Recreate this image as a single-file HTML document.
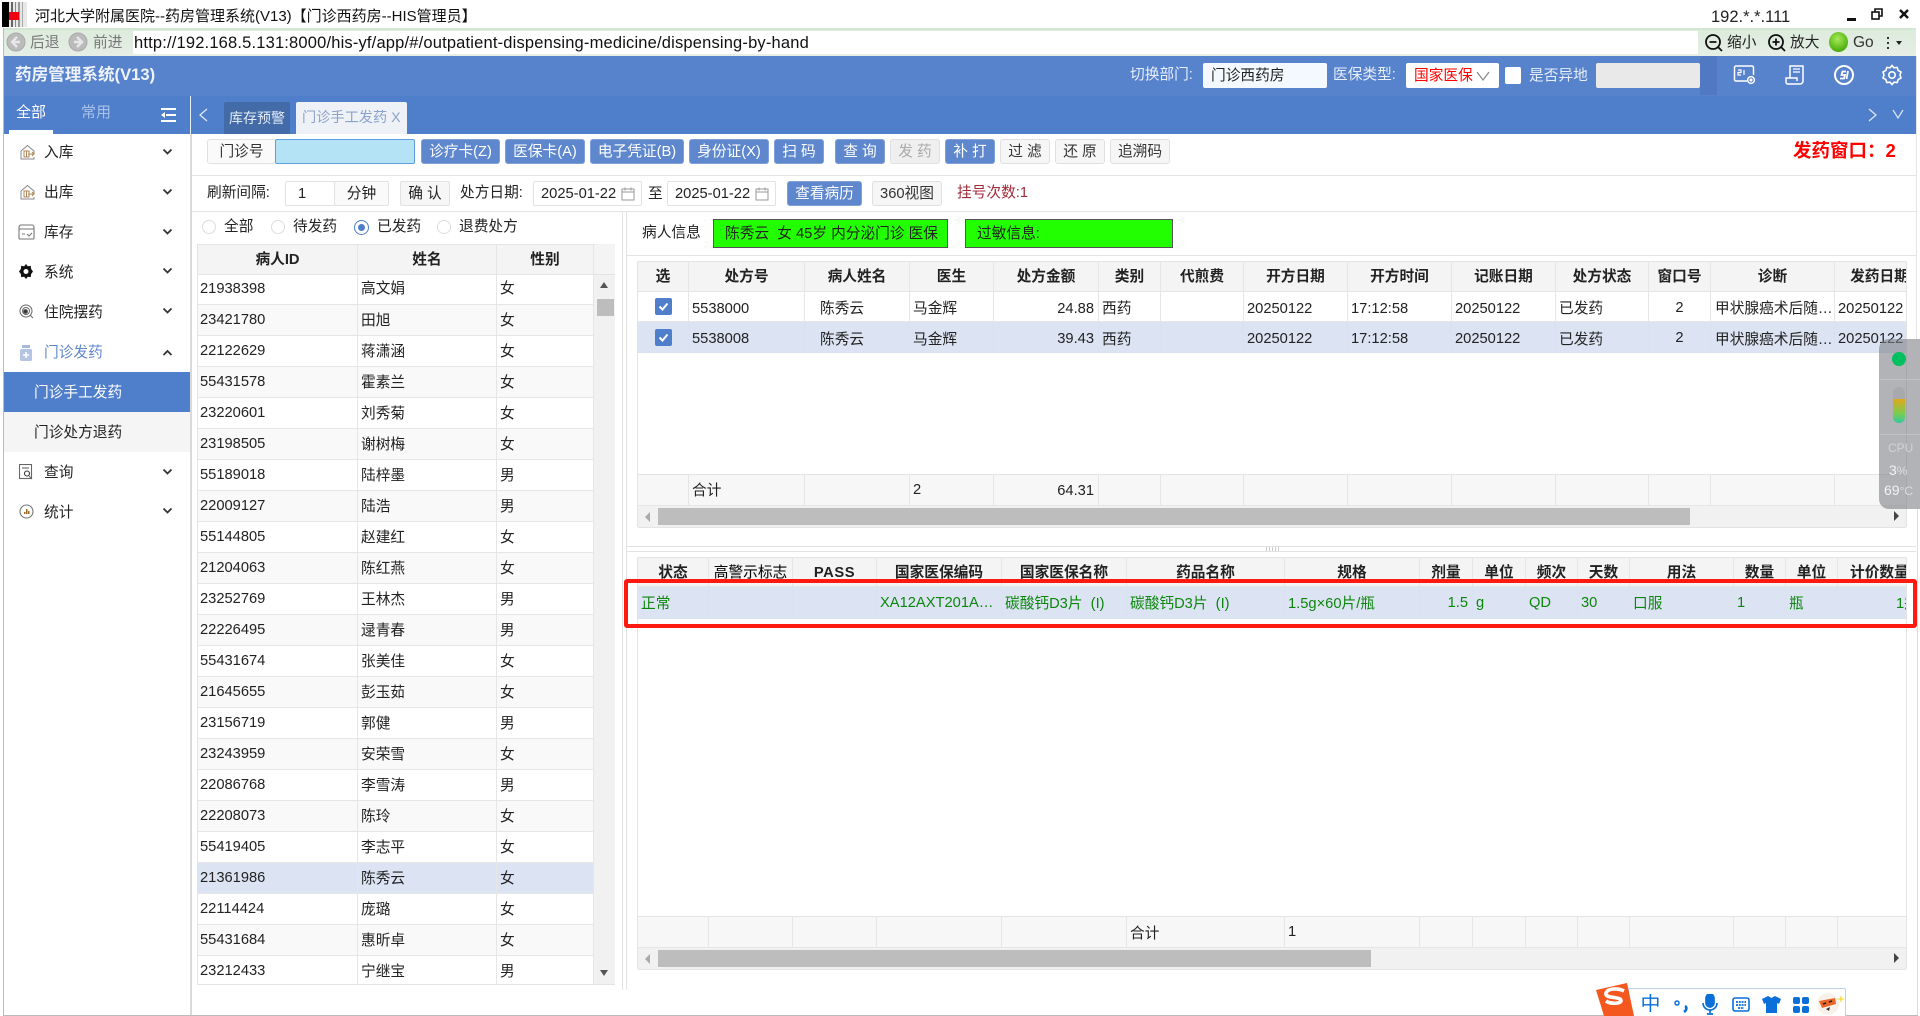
<!DOCTYPE html>
<html lang="zh"><head><meta charset="utf-8"><title>药房管理系统</title>
<style>
html,body{margin:0;padding:0;background:#fff}
body{width:1920px;height:1016px;position:relative;overflow:hidden;font-family:"Liberation Sans","Noto Sans CJK SC",sans-serif;font-size:14.7px;color:#222}
.a{position:absolute}
.t{position:absolute;white-space:nowrap;line-height:20px}
.b{position:absolute;box-sizing:border-box;text-align:center;border-radius:3px;white-space:nowrap;height:25px;line-height:25px;top:139px;border:1px solid #e0e0e0;background:#f6f6f6;color:#333}
.bl{background:#5f87cd;border-color:#7fa0d8;color:#fff}
.in{position:absolute;box-sizing:border-box;border:1px solid #e2e2e2;border-radius:2px;background:#fff;height:25px;line-height:25px;top:181px;white-space:nowrap}
.m{position:absolute;left:44px;line-height:20px;white-space:nowrap;color:#222}
.wt{color:#e8effa}
table{border-collapse:separate;border-spacing:0;table-layout:fixed;font-size:14.7px;color:#222}
td,th{box-sizing:border-box;border-right:1px solid #e6e6e6;border-bottom:1px solid #e6e6e6;padding:0 0 0 3px;overflow:hidden;white-space:nowrap;font-weight:normal}
th{font-weight:bold;background:#f4f4f4;text-align:center;padding:0 0 2px;color:#222}
.l tr:nth-child(even) td{background:#f9f9f9}
.l td{height:31px;padding-left:2px;padding-bottom:0}
.l td:nth-child(n+2){padding-left:3px;padding-bottom:2px}
.l tr.first td{height:30px;padding-bottom:2px}
.l tr.first td:nth-child(n+2){padding-bottom:4px}
.l tr.s td{background:#dce4f4}
.tp td{padding-top:2px}
.tp td:nth-child(2),.tp td:nth-child(5),.tp td:nth-child(8),.tp td:nth-child(9),.tp td:nth-child(10),.tp td:nth-child(14){padding-top:4px}
.hl td{background:#dce4f4;border-color:#d9e2f2}
.g td{color:#0c860c}
.f td{background:#f7f7f7;height:31px}
.r{text-align:right;padding-right:4px}
.sb{position:absolute;background:#f1f1f1}
.th{position:absolute;background:#bdbdbd}
.wrap{position:absolute;overflow:hidden}
.cb{display:block;width:17px;height:17px;margin:0 auto;background:#4f7ecb;border-radius:2px}
</style></head>
<body>
<!-- title bar -->
<svg class="a" style="left:2px;top:2px" width="25" height="25" viewBox="0 0 25 25"><rect width="25" height="25" fill="#e8e8e8"/><rect x="0" width="7" height="25" fill="#000"/><rect x="9" width="2" height="25" fill="#666"/><rect x="13" width="1" height="25" fill="#888"/><rect x="16" width="2" height="25" fill="#999"/><rect x="20" width="1" height="25" fill="#aaa"/><rect x="7" y="10" width="10" height="8" fill="#f00010"/></svg>
<div class="t" style="left:35px;top:7px;font-size:15px;color:#111">河北大学附属医院--药房管理系统(V13)【门诊西药房--HIS管理员】</div>
<div class="t" style="left:1711px;top:7px;font-size:16.5px;color:#222">192.*.*.111</div>
<div class="a" style="left:1847px;top:18px;width:9px;height:3px;background:#111"></div>
<svg class="a" style="left:1871px;top:8px" width="12" height="12" viewBox="0 0 12 12" fill="none" stroke="#111" stroke-width="1.6"><rect x="1" y="4" width="7" height="7"/><path d="M4 4V1h7v7H8"/></svg>
<svg class="a" style="left:1899px;top:9px" width="10" height="10" viewBox="0 0 10 10" stroke="#111" stroke-width="2.4"><path d="M1 1l8 8M9 1l-8 8"/></svg>

<!-- browser toolbar -->
<div class="a" style="left:3px;top:28px;width:1px;height:988px;background:#bbb"></div>
<div class="a" style="left:4px;top:28px;width:1912px;height:28px;background:linear-gradient(#dcebdc,#e6eee6)"></div>
<div class="a" style="left:4px;top:28px;width:1912px;height:2px;background:#d2e4d2"></div>
<div class="a" style="left:133px;top:31px;width:1565px;height:23px;background:#fff"></div>
<svg class="a" style="left:6px;top:32px" width="20" height="20" viewBox="0 0 20 20"><circle cx="10" cy="10" r="9" fill="#bbb" stroke="#aaa"/><path d="M11 5l-5 5 5 5M6 10h8" stroke="#e8e8e8" stroke-width="2.4" fill="none"/></svg>
<div class="t" style="left:30px;top:33px;color:#777">后退</div>
<svg class="a" style="left:68px;top:32px" width="20" height="20" viewBox="0 0 20 20"><circle cx="10" cy="10" r="9" fill="#bbb" stroke="#aaa"/><path d="M9 5l5 5-5 5M14 10H6" stroke="#e8e8e8" stroke-width="2.4" fill="none"/></svg>
<div class="t" style="left:93px;top:33px;color:#777">前进</div>
<div class="t" style="left:134px;top:33px;font-size:16.5px;color:#111;letter-spacing:.175px">http://192.168.5.131:8000/his-yf/app/#/outpatient-dispensing-medicine/dispensing-by-hand</div>
<svg class="a" style="left:1704px;top:33px" width="20" height="20" viewBox="0 0 20 20" fill="none" stroke="#111" stroke-width="1.8"><circle cx="9" cy="9" r="7"/><path d="M5.5 9h7M14 14l4 4"/></svg>
<div class="t" style="left:1727px;top:33px">缩小</div>
<svg class="a" style="left:1767px;top:33px" width="20" height="20" viewBox="0 0 20 20" fill="none" stroke="#111" stroke-width="1.8"><circle cx="9" cy="9" r="7"/><path d="M5.5 9h7M9 5.5v7M14 14l4 4"/></svg>
<div class="t" style="left:1790px;top:33px">放大</div>
<div class="a" style="left:1829px;top:32px;width:19px;height:20px;border-radius:50%;background:radial-gradient(circle at 45% 35%,#a6ea58,#5cb818 60%,#3a8c10)"></div>
<div class="t" style="left:1853px;top:33px;font-size:15.5px;color:#333">Go</div>
<div class="a" style="left:1887px;top:37px;width:2px;height:2px;background:#333;box-shadow:0 5px #333,0 10px #333"></div>
<div class="a" style="left:1896px;top:41px;border:3.5px solid transparent;border-top:4px solid #222"></div>

<!-- header -->
<div class="a" style="left:4px;top:56px;width:1912px;height:40px;background:#5782cc"></div>
<div class="t" style="left:15px;top:65px;font-size:16.6px;font-weight:bold;color:#eef3fb">药房管理系统(V13)</div>
<div class="t wt" style="left:1130px;top:65px">切换部门:</div>
<div class="a" style="left:1203px;top:63px;width:124px;height:25px;box-sizing:border-box;background:#f3f9ff;border-radius:2px;padding-left:8px;line-height:27px;color:#222">门诊西药房</div>
<div class="t wt" style="left:1333px;top:65px">医保类型:</div>
<div class="a" style="left:1406px;top:63px;width:93px;height:25px;box-sizing:border-box;background:#fff;border-radius:2px;padding-left:8px;line-height:27px;color:#f00">国家医保</div>
<svg class="a" style="left:1475px;top:70px" width="16" height="12" viewBox="0 0 16 12" fill="none" stroke="#888" stroke-width="1.2"><path d="M2 2l6 8 6-8"/></svg>
<div class="a" style="left:1505px;top:67px;width:16px;height:17px;background:#fff;border-radius:2px"></div>
<div class="t wt" style="left:1529px;top:66px">是否异地</div>
<div class="a" style="left:1596px;top:63px;width:104px;height:25px;background:#e9e9e9;border-radius:2px"></div>
<div class="a" style="left:1700px;top:56px;width:17px;height:39px;background:#5079c2"></div>
<svg class="a" style="left:1733px;top:65px" width="24" height="20" viewBox="0 0 24 20" fill="none" stroke="#fff" stroke-width="1.5"><path d="M14 16H3a1.5 1.5 0 0 1-1.5-1.5v-12A1.5 1.5 0 0 1 3 1h16a1.5 1.5 0 0 1 1.5 1.5V10"/><circle cx="18" cy="15" r="3.4"/><circle cx="18" cy="15" r=".8" fill="#fff"/><path d="M5 5h3v2.500H5v2.500h3M11 5v5" stroke-width="1.200"/></svg>
<svg class="a" style="left:1785px;top:64px" width="20" height="22" viewBox="0 0 20 22" fill="none" stroke="#fff" stroke-width="1.5"><path d="M5 14V2h13v15a3 3 0 0 1-3 3H3a2 2 0 0 1-2-2v-4h11v3"/><path d="M8 5h7M8 8h7" stroke-width="1.2"/></svg>
<svg class="a" style="left:1833px;top:64px" width="22" height="22" viewBox="0 0 22 22" fill="none" stroke="#fff" stroke-width="2"><circle cx="11" cy="11" r="9"/><path d="M13 7.500H9.500L8.500 11H12L11 14.500H7M15 7l-1.500 8" stroke-width="1.800"/></svg>
<svg class="a" style="left:1882px;top:64px" width="20" height="22" viewBox="0 0 20 22" fill="none" stroke="#fff" stroke-width="1.6"><path d="M10 1.500l2 2.300 3.200-.3 1 3 2.800 1.500-1 3 1 3-2.800 1.500-1 3-3.200-.3-2 2.300-2-2.300-3.200.3-1-3L1 14l1-3-1-3 2.800-1.500 1-3 3.200.3z"/><circle cx="10" cy="11" r="3.200"/></svg>

<!-- tab bar -->
<div class="a" style="left:4px;top:96px;width:1912px;height:38px;background:#4f7ecb"></div>
<div class="a" style="left:190px;top:96px;width:1px;height:38px;background:#e6edf8"></div>
<div class="t" style="left:16px;top:103px;color:#fff;font-size:15px">全部</div>
<div class="t" style="left:81px;top:103px;color:#a9c2ea;font-size:15px">常用</div>
<div class="a" style="left:9px;top:130px;width:44px;height:4px;background:#fff"></div>
<svg class="a" style="left:160px;top:108px" width="16" height="14" viewBox="0 0 16 14" fill="#fff"><rect x="1" width="15" height="2"/><rect x="6" y="6" width="10" height="2"/><rect x="1" y="12" width="15" height="2"/><path d="M1 7l4-3v6z"/></svg>
<svg class="a" style="left:198px;top:107px" width="12" height="16" viewBox="0 0 12 16" fill="none" stroke="#dce6f6" stroke-width="1.300"><path d="M9 2L2 8l7 6"/></svg>
<div class="a" style="left:224px;top:102px;width:66px;height:32px;background:#436ba8;border-radius:2px 2px 0 0;color:#e4ecf8;text-align:center;line-height:33px;font-size:14px;white-space:nowrap">库存预警</div>
<div class="a" style="left:296px;top:102px;width:111px;height:32px;background:#eef1f5;border-radius:2px 2px 0 0;color:#8aa3cc;line-height:33px;padding-left:6px;box-sizing:border-box;font-size:14.200px;white-space:nowrap">门诊手工发药 X</div>
<svg class="a" style="left:1866px;top:107px" width="12" height="16" viewBox="0 0 12 16" fill="none" stroke="#dce6f6" stroke-width="1.300"><path d="M3 2l7 6-7 6"/></svg>
<svg class="a" style="left:1891px;top:108px" width="14" height="12" viewBox="0 0 14 12" fill="none" stroke="#dce6f6" stroke-width="1.200"><path d="M2 2l5 8 5-8"/></svg>

<!-- sidebar -->
<div class="a" style="left:190px;top:134px;width:2px;height:882px;background:#d9d9d9"></div>
<svg class="a" style="left:19px;top:144px" width="17" height="17" viewBox="0 0 17 17" fill="none" stroke="#888" stroke-width="1"><path d="M2 7l6.500-5.500L15 7v3M15 13v2H2V7"/><path d="M5 7h5v6H5zM7.500 7v6M9 10h6M13 8l2 2-2 2" stroke="#b08858"/></svg>
<div class="m" style="top:143px">入库</div>
<svg class="a" style="left:19px;top:184px" width="17" height="17" viewBox="0 0 17 17" fill="none" stroke="#888" stroke-width="1"><path d="M2 7l6.500-5.500L15 7v3M15 13v2H2V7"/><path d="M5 7h5v6H5zM7.500 7v6M9 10h6M13 8l2 2-2 2" stroke="#b08858"/></svg>
<div class="m" style="top:183px">出库</div>
<svg class="a" style="left:18px;top:224px" width="17" height="16" viewBox="0 0 17 16" fill="none" stroke="#777" stroke-width="1.100"><path d="M1 5V3a2 2 0 0 1 2-2h11a2 2 0 0 1 2 2v2M1 5v9a1 1 0 0 0 1 1h13a1 1 0 0 0 1-1V5zM4 10h3M9 10l2 2 3-3" /></svg>
<div class="m" style="top:223px">库存</div>
<svg class="a" style="left:19px;top:264px" width="14" height="15" viewBox="0 0 14 15"><path fill="#111" d="M7 0l1.800 2.300 3-.4.300 3L14 7.500l-1.900 2.600-.3 3-3-.4L7 15l-1.800-2.300-3 .4-.3-3L0 7.500l1.900-2.600.3-3 3 .4z"/><circle cx="7" cy="7.500" r="2.500" fill="#fff"/></svg>
<div class="m" style="top:263px">系统</div>
<svg class="a" style="left:19px;top:304px" width="15" height="15" viewBox="0 0 15 15" fill="none" stroke="#666" stroke-width="1"><circle cx="7" cy="7" r="6"/><circle cx="7" cy="7" r="3.500"/><circle cx="6.500" cy="7.500" r="2" fill="#333"/><path d="M11 11l3 3"/></svg>
<div class="m" style="top:303px">住院摆药</div>
<svg class="a" style="left:20px;top:345px" width="12" height="16" viewBox="0 0 12 16"><rect x="2" y="0" width="8" height="3" fill="#a8b8dc"/><rect x="0" y="4" width="12" height="12" rx="1.500" fill="#b5c4e2"/><path d="M6 7v6M3 10h6" stroke="#fff" stroke-width="1.600"/></svg>
<div class="m" style="top:343px;color:#5f87cd">门诊发药</div>
<div class="a" style="left:4px;top:372px;width:186px;height:40px;background:#4f7ecb"></div>
<div class="m" style="left:34px;top:383px;color:#fff">门诊手工发药</div>
<div class="a" style="left:4px;top:412px;width:186px;height:40px;background:#f5f5f5"></div>
<div class="m" style="left:34px;top:423px">门诊处方退药</div>
<svg class="a" style="left:19px;top:464px" width="15" height="16" viewBox="0 0 15 16" fill="none" stroke="#666" stroke-width="1.100"><rect x=".5" y=".5" width="12" height="14"/><path d="M3 4h7"/><circle cx="8" cy="9.500" r="2.500" stroke="#333"/><path d="M10 12l3 3"/></svg>
<div class="m" style="top:463px">查询</div>
<svg class="a" style="left:19px;top:504px" width="15" height="15" viewBox="0 0 15 15" fill="none"><circle cx="7.500" cy="7.500" r="6.500" stroke="#777" stroke-width="1.100"/><path d="M5 10V8h1.500v2zM7 10V5h1.500v5zM9 10V7h1.500v3z" fill="#a06820"/></svg>
<div class="m" style="top:503px">统计</div>
<svg class="a" style="left:162px;top:148px" width="11" height="8" viewBox="0 0 11 8" fill="none" stroke="#333" stroke-width="1.800"><path d="M1.500 1.500l4 4 4-4"/></svg>
<svg class="a" style="left:162px;top:188px" width="11" height="8" viewBox="0 0 11 8" fill="none" stroke="#333" stroke-width="1.800"><path d="M1.500 1.500l4 4 4-4"/></svg>
<svg class="a" style="left:162px;top:228px" width="11" height="8" viewBox="0 0 11 8" fill="none" stroke="#333" stroke-width="1.800"><path d="M1.500 1.500l4 4 4-4"/></svg>
<svg class="a" style="left:162px;top:267px" width="11" height="8" viewBox="0 0 11 8" fill="none" stroke="#333" stroke-width="1.800"><path d="M1.500 1.500l4 4 4-4"/></svg>
<svg class="a" style="left:162px;top:307px" width="11" height="8" viewBox="0 0 11 8" fill="none" stroke="#333" stroke-width="1.800"><path d="M1.500 1.500l4 4 4-4"/></svg>
<svg class="a" style="left:162px;top:349px" width="11" height="8" viewBox="0 0 11 8" fill="none" stroke="#333" stroke-width="1.800"><path d="M1.500 6l4-4 4 4"/></svg>
<svg class="a" style="left:162px;top:468px" width="11" height="8" viewBox="0 0 11 8" fill="none" stroke="#333" stroke-width="1.800"><path d="M1.500 1.500l4 4 4-4"/></svg>
<svg class="a" style="left:162px;top:507px" width="11" height="8" viewBox="0 0 11 8" fill="none" stroke="#333" stroke-width="1.800"><path d="M1.500 1.500l4 4 4-4"/></svg>

<!-- toolbar row 1 -->
<div class="b" style="left:207px;width:69px;color:#333;background:#fafafa">门诊号</div>
<div class="a" style="left:275px;top:139px;width:140px;height:25px;box-sizing:border-box;background:#b3e3f5;border:1px solid #5f9fe0;border-radius:2px"></div>
<div class="b bl" style="left:421px;width:79px">诊疗卡(Z)</div>
<div class="b bl" style="left:505px;width:80px">医保卡(A)</div>
<div class="b bl" style="left:590px;width:94px">电子凭证(B)</div>
<div class="b bl" style="left:689px;width:80px">身份证(X)</div>
<div class="b bl" style="left:774px;width:50px">扫 码</div>
<div class="b bl" style="left:835px;width:50px">查 询</div>
<div class="b" style="left:890px;width:50px;color:#aaa;background:#efefef">发 药</div>
<div class="b bl" style="left:945px;width:50px">补 打</div>
<div class="b" style="left:1000px;width:50px">过 滤</div>
<div class="b" style="left:1055px;width:50px">还 原</div>
<div class="b" style="left:1110px;width:60px">追溯码</div>
<div class="t" style="left:1793px;top:141px;color:#f00;font-weight:bold;font-size:18.5px">发药窗口：2</div>
<div class="a" style="left:192px;top:175px;width:1724px;height:1px;background:#e2e2e2"></div>

<!-- toolbar row 2 -->
<div class="t" style="left:207px;top:183px">刷新间隔:</div>
<div class="in" style="left:285px;width:50px;padding-left:12px">1</div>
<div class="in" style="left:334px;width:55px;text-align:center;background:#fafafa">分钟</div>
<div class="in" style="left:400px;width:50px;text-align:center;background:#f6f6f6">确 认</div>
<div class="t" style="left:460px;top:183px">处方日期:</div>
<div class="in" style="left:533px;width:109px;padding-left:7px">2025-01-22</div>
<svg class="a" style="left:621px;top:187px" width="14" height="14" viewBox="0 0 14 14" fill="none" stroke="#999" stroke-width="1"><rect x="1" y="2" width="12" height="11"/><path d="M1 5h12M4 .5v3M10 .5v3"/></svg>
<div class="t" style="left:648px;top:184px">至</div>
<div class="in" style="left:667px;width:109px;padding-left:7px">2025-01-22</div>
<svg class="a" style="left:755px;top:187px" width="14" height="14" viewBox="0 0 14 14" fill="none" stroke="#999" stroke-width="1"><rect x="1" y="2" width="12" height="11"/><path d="M1 5h12M4 .5v3M10 .5v3"/></svg>
<div class="b bl" style="left:787px;width:75px;top:181px">查看病历</div>
<div class="b" style="left:872px;width:70px;top:181px">360视图</div>
<div class="t" style="left:957px;top:183px;color:#a52a3a">挂号次数:1</div>
<div class="a" style="left:192px;top:211px;width:1724px;height:1px;background:#e2e2e2"></div>

<!-- radios -->
<div class="a" style="left:202px;top:220px;width:14px;height:14px;box-sizing:border-box;border:1px solid #ddd;border-radius:50%"></div>
<div class="t" style="left:224px;top:217px">全部</div>
<div class="a" style="left:271px;top:220px;width:14px;height:14px;box-sizing:border-box;border:1px solid #ddd;border-radius:50%"></div>
<div class="t" style="left:293px;top:217px">待发药</div>
<div class="a" style="left:354px;top:220px;width:15px;height:15px;box-sizing:border-box;border:1px solid #4f7ecb;border-radius:50%"></div>
<div class="a" style="left:358px;top:224px;width:7px;height:7px;background:#4f7ecb;border-radius:50%"></div>
<div class="t" style="left:377px;top:217px">已发药</div>
<div class="a" style="left:437px;top:220px;width:14px;height:14px;box-sizing:border-box;border:1px solid #ddd;border-radius:50%"></div>
<div class="t" style="left:459px;top:217px">退费处方</div>

<!-- left table -->
<div class="a" style="left:197px;top:244px;width:418px;height:741px;box-sizing:border-box;border:1px solid #e4e4e4"></div>
<div class="sb" style="left:594px;top:244px;width:21px;height:740px"></div>
<div class="a" style="left:594px;top:245px;width:21px;height:30px;background:#f4f4f4;border-bottom:1px solid #e4e4e4;box-sizing:border-box"></div>
<div class="a" style="left:600px;top:282px;border:4.500px solid transparent;border-bottom:6px solid #555;border-top:0"></div>
<div class="th" style="left:597px;top:299px;width:17px;height:17px"></div>
<div class="a" style="left:600px;top:970px;border:4.500px solid transparent;border-top:6px solid #555;border-bottom:0"></div>
<div class="wrap" style="left:198px;top:245px;width:396px;height:739px">
<table class="l" style="width:396px"><colgroup><col style="width:160px"><col style="width:139px"><col style="width:97px"></colgroup>
<tbody>
<tr><th style="height:30px">病人ID</th><th>姓名</th><th>性别</th></tr>
</tbody>
<tbody>
<tr class="first"><td>21938398</td><td>高文娟</td><td>女</td></tr>
<tr><td>23421780</td><td>田旭</td><td>女</td></tr>
<tr><td>22122629</td><td>蒋潇涵</td><td>女</td></tr>
<tr><td>55431578</td><td>霍素兰</td><td>女</td></tr>
<tr><td>23220601</td><td>刘秀菊</td><td>女</td></tr>
<tr><td>23198505</td><td>谢树梅</td><td>女</td></tr>
<tr><td>55189018</td><td>陆梓墨</td><td>男</td></tr>
<tr><td>22009127</td><td>陆浩</td><td>男</td></tr>
<tr><td>55144805</td><td>赵建红</td><td>女</td></tr>
<tr><td>21204063</td><td>陈红燕</td><td>女</td></tr>
<tr><td>23252769</td><td>王林杰</td><td>男</td></tr>
<tr><td>22226495</td><td>逯青春</td><td>男</td></tr>
<tr><td>55431674</td><td>张美佳</td><td>女</td></tr>
<tr><td>21645655</td><td>彭玉茹</td><td>女</td></tr>
<tr><td>23156719</td><td>郭健</td><td>男</td></tr>
<tr><td>23243959</td><td>安荣雪</td><td>女</td></tr>
<tr><td>22086768</td><td>李雪涛</td><td>男</td></tr>
<tr><td>22208073</td><td>陈玲</td><td>女</td></tr>
<tr><td>55419405</td><td>李志平</td><td>女</td></tr>
<tr class="s"><td>21361986</td><td>陈秀云</td><td>女</td></tr>
<tr><td>22114424</td><td>庞璐</td><td>女</td></tr>
<tr><td>55431684</td><td>惠昕卓</td><td>女</td></tr>
<tr><td>23212433</td><td>宁继宝</td><td>男</td></tr>
</tbody></table></div>

<!-- splitter -->
<div class="a" style="left:622px;top:212px;width:1px;height:778px;background:#e2e2e2"></div>
<div class="a" style="left:626px;top:212px;width:1px;height:778px;background:#e2e2e2"></div>

<!-- patient info -->
<div class="t" style="left:642px;top:223px">病人信息</div>
<div class="a" style="left:713px;top:219px;width:235px;height:29px;box-sizing:border-box;background:#22ff00;border:1px solid #555;padding-left:11px;line-height:28px;color:#222;white-space:nowrap">陈秀云&nbsp; 女 45岁 内分泌门诊 医保</div>
<div class="a" style="left:965px;top:219px;width:208px;height:29px;box-sizing:border-box;background:#22ff00;border:1px solid #555;padding-left:11px;line-height:28px;color:#222;white-space:nowrap">过敏信息:</div>
<div class="a" style="left:627px;top:255px;width:1289px;height:1px;background:#e2e2e2"></div>

<!-- top table -->
<div class="a" style="left:637px;top:261px;width:1px;height:266px;background:#e4e4e4"></div>
<div class="a" style="left:638px;top:261px;width:1268px;height:1px;background:#e4e4e4"></div>
<div class="a" style="left:1906px;top:261px;width:1px;height:266px;background:#e4e4e4"></div>
<div class="wrap" style="left:638px;top:262px;width:1268px;height:92px">
<table class="tp" style="width:1287px"><colgroup><col style="width:51px"><col style="width:116px"><col style="width:105px"><col style="width:84px"><col style="width:105px"><col style="width:62px"><col style="width:83px"><col style="width:104px"><col style="width:104px"><col style="width:104px"><col style="width:93px"><col style="width:62px"><col style="width:124px"><col style="width:90px"></colgroup>
<tr><th style="height:30px">选</th><th>处方号</th><th>病人姓名</th><th>医生</th><th>处方金额</th><th>类别</th><th>代煎费</th><th>开方日期</th><th>开方时间</th><th>记账日期</th><th>处方状态</th><th>窗口号</th><th>诊断</th><th>发药日期</th></tr>
<tr><td style="height:30px;padding:0"><span class="cb"><svg width="17" height="17" viewBox="0 0 17 17" fill="none" stroke="#fff" stroke-width="2"><path d="M4.500 8.500l3 3 5-6"/></svg></span></td><td>5538000</td><td style="padding-left:15px">陈秀云</td><td>马金辉</td><td class="r">24.88</td><td>西药</td><td></td><td>20250122</td><td>17:12:58</td><td>20250122</td><td>已发药</td><td style="text-align:center;padding:2px 0 0">2</td><td style="padding-left:4px">甲状腺癌术后随…</td><td>20250122</td></tr>
<tr class="hl"><td style="height:31px;padding:0"><span class="cb"><svg width="17" height="17" viewBox="0 0 17 17" fill="none" stroke="#fff" stroke-width="2"><path d="M4.500 8.500l3 3 5-6"/></svg></span></td><td>5538008</td><td style="padding-left:15px">陈秀云</td><td>马金辉</td><td class="r">39.43</td><td>西药</td><td></td><td>20250122</td><td>17:12:58</td><td>20250122</td><td>已发药</td><td style="text-align:center;padding:2px 0 0">2</td><td style="padding-left:4px">甲状腺癌术后随…</td><td>20250122</td></tr>
</table></div>
<div class="a" style="left:638px;top:474px;width:1268px;height:1px;background:#e4e4e4"></div>
<div class="wrap" style="left:638px;top:475px;width:1268px;height:31px">
<table class="f" style="width:1287px"><colgroup><col style="width:51px"><col style="width:116px"><col style="width:105px"><col style="width:84px"><col style="width:105px"><col style="width:62px"><col style="width:83px"><col style="width:104px"><col style="width:104px"><col style="width:104px"><col style="width:93px"><col style="width:62px"><col style="width:124px"><col style="width:90px"></colgroup>
<tr><td></td><td style="padding-bottom:2px">合计</td><td></td><td>2</td><td class="r" style="padding-top:2px">64.31</td><td></td><td></td><td></td><td></td><td></td><td></td><td></td><td></td><td></td></tr>
</table></div>
<div class="sb" style="left:638px;top:506px;width:1268px;height:21px;border-bottom:1px solid #e4e4e4"></div>
<div class="th" style="left:658px;top:508px;width:1032px;height:17px"></div>
<div class="a" style="left:645px;top:512px;border:5px solid transparent;border-right:5px solid #aaa;border-left:0"></div>
<div class="a" style="left:1894px;top:511px;border:5px solid transparent;border-left:5px solid #444;border-right:0"></div>

<!-- horizontal splitter -->
<div class="a" style="left:627px;top:546px;width:1289px;height:1px;background:#e2e2e2"></div>
<div class="a" style="left:627px;top:551px;width:1289px;height:1px;background:#e2e2e2"></div>
<div class="a" style="left:1266px;top:547px;width:14px;height:4px;background:repeating-linear-gradient(90deg,#ccc 0 1px,#fff 1px 3px)"></div>

<!-- bottom table -->
<div class="a" style="left:637px;top:557px;width:1px;height:412px;background:#e4e4e4"></div>
<div class="a" style="left:638px;top:557px;width:1268px;height:1px;background:#e4e4e4"></div>
<div class="a" style="left:1906px;top:557px;width:1px;height:412px;background:#e4e4e4"></div>
<div class="wrap" style="left:638px;top:558px;width:1268px;height:61px">
<table style="width:1290px"><colgroup><col style="width:71px"><col style="width:84px"><col style="width:84px"><col style="width:125px"><col style="width:125px"><col style="width:158px"><col style="width:135px"><col style="width:53px"><col style="width:53px"><col style="width:52px"><col style="width:52px"><col style="width:104px"><col style="width:52px"><col style="width:52px"><col style="width:90px"></colgroup>
<tr><th style="height:29px">状态</th><th style="font-weight:normal;color:#000">高警示标志</th><th style="letter-spacing:.6px;padding:2px 0 0">PASS</th><th>国家医保编码</th><th>国家医保名称</th><th>药品名称</th><th>规格</th><th>剂量</th><th>单位</th><th>频次</th><th>天数</th><th>用法</th><th>数量</th><th>单位</th><th style="text-align:left;padding-left:12px">计价数量</th></tr>
<tr class="hl g"><td style="height:32px">正常</td><td></td><td></td><td>XA12AXT201A…</td><td>碳酸钙D3片&nbsp; (I)</td><td>碳酸钙D3片&nbsp; (I)</td><td>1.5g×60片/瓶</td><td class="r">1.5</td><td>g</td><td>QD</td><td>30</td><td>口服</td><td>1</td><td>瓶</td><td style="padding-left:58px">1瓶</td></tr>
</table></div>
<div class="a" style="left:638px;top:916px;width:1268px;height:1px;background:#e4e4e4"></div>
<div class="wrap" style="left:638px;top:917px;width:1268px;height:31px">
<table class="f" style="width:1290px"><colgroup><col style="width:71px"><col style="width:84px"><col style="width:84px"><col style="width:125px"><col style="width:125px"><col style="width:158px"><col style="width:135px"><col style="width:53px"><col style="width:53px"><col style="width:52px"><col style="width:52px"><col style="width:104px"><col style="width:52px"><col style="width:52px"><col style="width:90px"></colgroup>
<tr><td></td><td></td><td></td><td></td><td></td><td>合计</td><td>1</td><td></td><td></td><td></td><td></td><td></td><td></td><td></td><td></td></tr>
</table></div>
<div class="sb" style="left:638px;top:948px;width:1268px;height:21px;border-bottom:1px solid #e4e4e4"></div>
<div class="th" style="left:658px;top:950px;width:713px;height:17px"></div>
<div class="a" style="left:645px;top:954px;border:5px solid transparent;border-right:5px solid #aaa;border-left:0"></div>
<div class="a" style="left:1894px;top:953px;border:5px solid transparent;border-left:5px solid #444;border-right:0"></div>

<!-- red annotation -->
<div class="a" style="left:624px;top:579px;width:1293px;height:49px;box-sizing:border-box;border:4px solid #ff1a10;border-radius:3px"></div>

<!-- monitor widget -->
<div class="a" style="left:1879px;top:339px;width:41px;height:170px;background:rgba(125,128,135,.6);border-radius:10px 0 0 10px"></div>
<div class="a" style="left:1892px;top:352px;width:14px;height:14px;border-radius:50%;background:#00c060"></div>
<div class="a" style="left:1880px;top:379px;width:40px;height:1px;background:rgba(255,255,255,.2)"></div>
<div class="a" style="left:1893px;top:387px;width:12px;height:36px;border-radius:6px;background:#a7a9ad"></div>
<div class="a" style="left:1893px;top:399px;width:12px;height:24px;border-radius:0 0 6px 6px;background:linear-gradient(#e0a818,#7ccc50 60%,#30c8a0)"></div>
<div class="a" style="left:1880px;top:434px;width:40px;height:1px;background:rgba(255,255,255,.2)"></div>
<div class="t" style="left:1888px;top:438px;font-size:12px;color:#d0d2d6">CPU</div>
<div class="t" style="left:1889px;top:460px;font-size:14px;color:#f2f2f2">3<span style="font-size:12px;color:#dcdcdc">%</span></div>
<div class="t" style="left:1884px;top:480px;font-size:14px;color:#f2f2f2">69<span style="font-size:12px;color:#dcdcdc">°C</span></div>

<!-- frame -->
<div class="a" style="left:1916px;top:56px;width:1px;height:283px;background:#e6e6e6"></div>
<div class="a" style="left:1917px;top:509px;width:1px;height:507px;background:#ddd"></div>
<div class="a" style="left:3px;top:1015px;width:1915px;height:1px;background:#bbb"></div>

<!-- IME bar -->
<div class="a" style="left:1628px;top:988px;width:218px;height:28px;box-sizing:border-box;background:#fff;border:1px solid #bcd0e6;border-bottom:0;border-radius:2px 2px 0 0"></div>
<svg class="a" style="left:1595px;top:982px" width="40" height="34" viewBox="0 0 40 34"><path d="M1 8L32 1l7 33H9z" fill="#f4581e"/><path d="M29 9c-6-3-16-3-18 2-2 6 16 3 15 8-1 3-11 3-15 0" fill="none" stroke="#fff" stroke-width="3.600"/></svg>
<div class="t" style="left:1641px;top:995px;font-size:19px;color:#0a6fd8;transform:scaleX(1.05)">中</div>
<svg class="a" style="left:1674px;top:998px" width="15" height="16" viewBox="0 0 15 16"><circle cx="3" cy="5" r="2" fill="none" stroke="#0a6fd8" stroke-width="1.500"/><path d="M11 8c2 1 2 4-1 6" fill="none" stroke="#0a6fd8" stroke-width="2.600"/></svg>
<svg class="a" style="left:1702px;top:994px" width="16" height="21" viewBox="0 0 16 21" fill="none" stroke="#0a6fd8" stroke-width="1.700"><rect x="4" y="0" width="8" height="13" rx="4" fill="#0a6fd8"/><path d="M1 9a7 7 0 0 0 14 0M8 16v3M5 20h6"/></svg>
<svg class="a" style="left:1732px;top:997px" width="18" height="15" viewBox="0 0 18 15"><rect x="1" y="1" width="16" height="13" rx="2" fill="none" stroke="#0a6fd8" stroke-width="1.600"/><path d="M4 5h10M4 8h10M6 11h6" stroke="#0a6fd8" stroke-width="1.800" stroke-dasharray="2 .8"/></svg>
<svg class="a" style="left:1762px;top:996px" width="19" height="17" viewBox="0 0 19 17"><path d="M6 0l3.500 2L13 0l6 3-2 5-2-1v10H4V7L2 8 0 3z" fill="#0a6fd8"/></svg>
<svg class="a" style="left:1793px;top:997px" width="16" height="16" viewBox="0 0 16 16" fill="#0a6fd8"><rect width="7" height="7" rx="2"/><rect x="9" width="7" height="7" rx="2"/><rect y="9" width="7" height="7" rx="2"/><rect x="9" y="9" width="7" height="7" rx="2"/></svg>
<svg class="a" style="left:1818px;top:991px" width="27" height="25" viewBox="0 0 27 25"><circle cx="10" cy="13" r="11" fill="#f8f1ea"/><path d="M1 10l16-3 1 6-14 4z" fill="#e8662a"/><path d="M5 13l3-1M11 11l3-1" stroke="#222" stroke-width="1.500"/><path d="M8 18l4-2-1 4z" fill="#333"/><path d="M23 4l1 3 3 1-3 1-1 3-1-3-3-1 3-1z" fill="#f7e04a"/></svg>
</body></html>
